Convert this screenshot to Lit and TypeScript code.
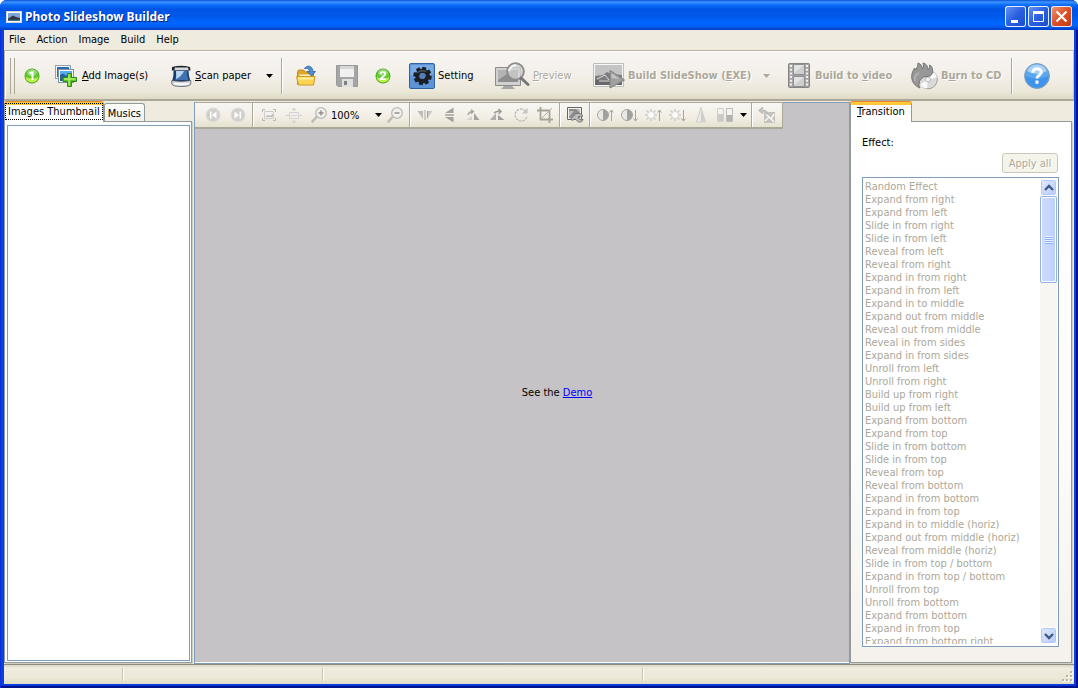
import { LitElement, html, css, svg, TemplateResult } from "lit";
import { customElement, property } from "lit/decorators.js";

type Glyph = [number, number, TemplateResult];

const badge = (digit: TemplateResult) => svg`
  <circle cx="8" cy="8" r="7.5" fill="#45a81c"/><circle cx="8" cy="8" r="6.8" fill="#62c832"/>
  <path d="M1.6 9a6.5 6.5 0 0 0 12.8 0c-3 2-9 2-12.8 0z" fill="#c2f04c"/>
  <ellipse cx="8" cy="4.6" rx="5" ry="3.4" fill="#a5e48a" opacity=".7"/>${digit}`;
const sun = svg`<path d="M6 2v12M0 8h12M1.5 3.5l9 9M10.5 3.5l-9 9" stroke="#cfcecb" stroke-width="1.5"/><circle cx="6" cy="8" r="3.5" fill="#fdfdfb" stroke="#d6d5d2"/>`;
const up = svg`<path d="M14.5 14V3M12.5 5.5l2-2.5 2 2.5" fill="none" stroke="#a6a59f"/>`;
const down = svg`<path d="M14.5 3v11M12.5 11.5l2 2.5 2-2.5" fill="none" stroke="#a6a59f"/>`;
const half = svg`<circle cx="6" cy="8" r="5.5" fill="#e9e8e4" stroke="#a9a8a4"/><path d="M6 2.5a5.5 5.5 0 0 1 0 11z" fill="#a2a19d"/>`;
const lens = (plus: boolean) => svg`
  <path d="M5.5 10L1.5 14.5" stroke="#bdbcb8" stroke-width="2.6" stroke-linecap="round"/>
  <circle cx="10" cy="6" r="5.3" fill="#f1f0ed" stroke="#bbbab6" stroke-width="1.3"/>
  <path d="M7.5 6h5" stroke="#8c8b86" stroke-width="1.4"/>${plus ? svg`<path d="M10 3.5v5" stroke="#8c8b86" stroke-width="1.4"/>` : ""}`;
const teeth = "M-1.8-9.2h3.6l.8 4h-5.2zM-1.8 9.2h3.6l.8-4h-5.2zM-9.2-1.8v3.6l4 .8v-5.2zM9.2-1.8v3.6l-4 .8v-5.2z";

const glyphs: Record<string, Glyph> = {
  app: [16, 14, svg`<rect x=".5" y="1.5" width="15" height="11" fill="#fff" stroke="#d8d8d8"/><rect x="2" y="3" width="12" height="8" fill="#7fa6d6"/><path d="M2 8.5l2-1 3-2 3 1.5 4 1v3H2z" fill="#2d3844"/><path d="M2 9.8h12V11H2z" fill="#536d8a"/>`],
  min: [21, 21, svg`<path d="M6 14h7v3H6z" fill="#fff"/>`],
  max: [21, 21, svg`<path d="M5.5 5.5h10v10h-10z" fill="none" stroke="#fff"/><path d="M5 5h11v3H5z" fill="#fff"/>`],
  close: [21, 21, svg`<path d="M5.5 5.5l10 10M15.5 5.5l-10 10" stroke="#fff" stroke-width="2.2"/>`],
  one: [16, 16, badge(svg`<path d="M5.5 5.5L8.5 4v8" fill="none" stroke="#fff" stroke-width="2"/>`)],
  two: [16, 16, badge(svg`<path d="M5.5 6c0-3 5.2-2.5 4.7.3C10 8 6 9.5 5.6 11.2h5.2" fill="none" stroke="#fff" stroke-width="1.8"/>`)],
  add: [22, 22, svg`<rect x=".5" y=".5" width="15" height="13" fill="#f4f7fa" stroke="#91a3b2"/><path d="M2 2h12v10H2z" fill="#2f6bb0"/><rect x="3.5" y="4.5" width="15" height="13" fill="#fff" stroke="#7f92a5"/><path d="M5 6h12v5H5z" fill="#5aabf0"/><path d="M5 10l3-1.5 3 2 6-2.5v8H5z" fill="#2a6098"/><path d="M12.5 8.5h4v4h5v4h-5v5h-4v-5H8v-4h4.5z" fill="#5cc826" stroke="#2c8a15"/><path d="M14 9.5v11M9 14h11.5" stroke="#b8f268" stroke-width="1.3"/>`],
  scan: [21, 22, svg`<path d="M1 2Q10-.5 19 2l.5 3.5H.8z" fill="#25292e"/><path d="M4 2.5h13l.5 2.5H3.5z" fill="#d6dade"/><path d="M2.5 5.5h15q0 6 2 11H1Q3 11 2.500 5.500z" fill="#173a6c"/><path d="M5 6h11q0 5 1.500 9H4Q5.500 11 5 6z" fill="#3f72b2"/><path d="M5 6h8q-2 5-8 8 .5-4 0-8z" fill="#bcd6ef"/><path d="M.8 15.500q9.500 2 19 0v3.500q-1 2.500-9.500 2.500T.8 19z" fill="#d5d9dd" stroke="#555b61" stroke-width=".8"/><path d="M3 18.500q7 1.500 15 0" fill="none" stroke="#fff" stroke-width="1.5"/>`],
  open: [22, 22, svg`<path d="M2.5 19.5V6.5l1-1.5h5l1.5 2h8.5v12z" fill="#e0a62a" stroke="#c18a1c"/><path d="M4.5 9.5h12l1 9H3.5z" fill="#fff2b8"/><path d="M1.5 11.5h18.5l-1.5 8.5h-15z" fill="#fbd454" stroke="#cf9a25"/><path d="M3 12.5h15.5l-.4 2H3.4z" fill="#fff09a"/><path d="M9.5 3.5c2-3.5 8-3.5 8.5 3h2.5l-4 4.5-4.3-4.5h2.6c-.3-2.8-3-3.5-5.3-3z" fill="#4d8fd0" stroke="#285f9d" stroke-width=".8"/>`],
  save: [22, 22, svg`<path d="M.5 .5h21v21H2l-1.5-1.5z" fill="#a5a5a5" stroke="#999"/><path d="M4 1h14v11H4z" fill="#f0f0f0"/><path d="M4 1h14v3H4z" fill="#d6d6d6"/><path d="M6 14h11v8H6z" fill="#e0e0e0"/><path d="M8 16h3v4H8z" fill="#808080"/>`],
  setting: [26, 26, svg`<rect x=".5" y=".5" width="25" height="25" rx="1.5" fill="#5a93d8" stroke="#31619f"/><path d="M1.5 12.5Q13 16 24.5 11V2h-23z" fill="#7aaae4"/><g transform="translate(13.5 13) rotate(12)"><circle r="5" fill="none" stroke="#1a1f25" stroke-width="4"/><path d="${teeth}" fill="#1a1f25"/><path d="${teeth}" fill="#1a1f25" transform="rotate(45)"/><circle r="3" fill="#547fb5"/></g><path d="M8 10q4-3.5 9-1.5" fill="none" stroke="#48525c" stroke-width="1.5"/>`],
  preview: [35, 28, svg`<path d="M.5 5.5h25v18H.5z" fill="#d1d1d1" stroke="#8c8c8c"/><path d="M3 8h20v12H3z" fill="#8d8d8d"/><path d="M3 8h15L3 18z" fill="#b4b4b4"/><path d="M9 24h8l3 3H6z" fill="#a5a5a5"/><circle cx="20.5" cy="9.5" r="8.3" fill="#d4d4d4" fill-opacity=".75" stroke="#8c8c8c" stroke-width="2"/><path d="M14 9q1-5 7-6" stroke="#f6f6f6" stroke-width="2" fill="none"/><path d="M26 16l7 6.5" stroke="#777" stroke-width="3" stroke-linecap="round"/>`],
  exe: [32, 26, svg`<path d="M.5 .5h30v23H.5z" fill="#f7f7f7" stroke="#bdbdbd"/><path d="M2 2h27v20H2z" fill="#c4c4c4"/><path d="M2 13l8-1 4-3 4 2 11 1v9H2z" fill="#7d7d7d"/><path d="M2 17h27v5H2z" fill="#686868"/><path d="M4 16l8-4 4 5M6 18h12" stroke="#ddd" fill="none"/><path d="M17 7.5V25l14.5-8z" fill="#a0a0a0" stroke="#7f7f7f"/><path d="M18.5 10v5l8 1z" fill="#c3c3c3"/>`],
  film: [22, 25, svg`<rect x=".5" y=".5" width="21" height="24" rx="1" fill="#a3a3a3" stroke="#858585"/><path d="M5.5 1.5h11v10h-11zM5.5 13.5h11v10h-11z" fill="#cfcfcf" stroke="#8f8f8f"/><path d="M6 2h10L6 10zM6 14h10L6 22z" fill="#e3e3e3"/><path d="M3 2v22M19 2v22" stroke="#f2f2f2" stroke-width="2.2" stroke-dasharray="2 1.7"/>`],
  burn: [27, 28, svg`<circle cx="17" cy="17.5" r="9.3" fill="#dadada" stroke="#9c9c9c"/><path d="M17 17.5l6-7a9 9 0 0 1 3 5zM17 17.5l-1 9a9 9 0 0 1-7-4z" fill="#fafafa"/><circle cx="17" cy="17.5" r="2.6" fill="#eee" stroke="#bbb"/><path d="M9 26C1 23-1 15 2 9l1.5-3L5 8C6 5 7 4 7 1c3 1 4 3 4.5 6 1.5-2 1-4 .5-6 4 1 5 4 5 7 1.5-1.5 2-3 1.500-5 4 2 4 8 1 10.500-3 2-6 0-8.500 2.500-3 3-4 6-2 10z" fill="#989898" stroke="#737373"/><path d="M4 19c-1-4 1-7 4-8" fill="none" stroke="#b4b4b4" stroke-width="1.8"/>`],
  help: [26, 26, svg`<circle cx="13" cy="13" r="12.4" fill="#5aa7ef" stroke="#7f97b0"/><path d="M1.5 13a11.5 11.5 0 0 0 23 0q-12 5-23 0z" fill="#3f93ea"/><path d="M3 8a11 11 0 0 1 20 0q-10 6-20 0z" fill="#a7d2f8"/><path d="M8.7 9.8c0-5.6 8.9-5.3 8.6-.5-.1 3-4.3 3-4.3 6.2" fill="none" stroke="#fff" stroke-width="3"/><path d="M11.5 17.5h3v3.2h-3z" fill="#fff"/>`],
  prev: [16, 16, svg`<circle cx="8" cy="8" r="7" fill="#d1d0cd" stroke="#dfdedb"/><path d="M5 4.5h1.5v7H5zM11.5 4.5v7L7 8z" fill="#fff"/>`],
  next: [16, 16, svg`<circle cx="8" cy="8" r="7" fill="#d1d0cd" stroke="#dfdedb"/><path d="M9.5 4.5H11v7H9.5zM4.5 4.5v7L9 8z" fill="#fff"/>`],
  fit: [16, 16, svg`<path d="M1.5 5V2.5H4M12 2.5h2.5V5M14.5 11v2.5H12M4 13.5H1.5V11" fill="none" stroke="#b9b8b4"/><path d="M3.5 4.5h9v7h-9z" fill="#f3f2ef" stroke="#cfcecb"/><path d="M4 10l3-2 2 1 3-2v3H4z" fill="#bcbbb8"/>`],
  actual: [16, 16, svg`<path d="M3.5 5.5h9v6h-9z" fill="#f2f1ee" stroke="#d4d3d0"/><path d="M8 1v3M8 13v3M0 8.5h3M13 8.5h3M6 3l2-2 2 2M6 14l2 2 2-2M5 9.5L7 8l2 1 2-1" stroke="#d0cfcc" fill="none"/>`],
  zin: [16, 16, lens(true)],
  zout: [16, 16, lens(false)],
  fliph: [16, 16, svg`<path d="M.5 4H6v8z" fill="#bcbbb7"/><path d="M8 3v10" stroke="#aaa9a5"/><path d="M15.5 4H10v8z" fill="#c9c8c4"/><path d="M10.5 4v7" stroke="#a3a29e"/>`],
  flipv: [16, 18, svg`<path d="M12.5 1.5V7H4zM12.5 16.5V11H4z" fill="#a3a29e"/><path d="M4 9h9" stroke="#a3a29e" stroke-width="1.5"/>`],
  rotl: [16, 16, svg`<path d="M9 6l5.5 7H9z" fill="#a3a29e"/><path d="M1.5 13H7V9z" fill="#d2d1cd"/><path d="M3 8q1-3.5 5-3.5M6 2.5l2.3 2L6 6.8" fill="none" stroke="#a8a7a3" stroke-width="1.5"/>`],
  rotr: [16, 16, svg`<path d="M1 13h6V6z" fill="#b0afab"/><path d="M9 13h6.5L9 8z" fill="#9f9e9a"/><path d="M5 6q3-2.5 7-1.5M9.5 2L12 4.5 9.5 7" fill="none" stroke="#9b9a96" stroke-width="1.5"/>`],
  rotate: [16, 16, svg`<path d="M12.5 4A6 6 0 1 0 14 9" fill="none" stroke="#bdbcb8" stroke-width="1.4" stroke-dasharray="2.5 1"/><path d="M14.5 1v5.5H9z" fill="#c4c3bf"/>`],
  crop: [18, 18, svg`<path d="M4.5 1v12.5H17M1 4.5h12.5V17" fill="none" stroke="#a7a395" stroke-width="1.8"/><path d="M5 13L16 2" stroke="#b3b0a4"/>`],
  edit: [18, 18, svg`<path d="M1.5 1.5h14v12h-14z" fill="#f1f1ef" stroke="#666"/><path d="M3 3h11v9H3z" fill="#8c8c8c"/><path d="M3 11l5-6H3zM10 3h4v4z" fill="#bcbcbc"/><path d="M10 7.5h4l3 2.5-2 1-2-1-1 2 3 2 2-1-1 2.500-3 .8-4-3.300-3 1.500-1-2z" fill="#bdbdbd" stroke="#6a6a6a" stroke-width=".8"/>`],
  conup: [17, 16, svg`${half}${up}`],
  condown: [17, 16, svg`${half}${down}`],
  briup: [17, 16, svg`${sun}${up}`],
  bridown: [17, 16, svg`${sun}${down}`],
  sharp: [16, 18, svg`<path d="M8 1.5L12.5 16h-9z" fill="#ebeae7" stroke="#cfcecb"/><path d="M8 3l4 12.5H8z" fill="#cfcecb"/>`],
  compare: [18, 16, svg`<path d="M1.5 1.5h6v13h-6z" fill="#f3f2ef" stroke="#d0cfcc"/><path d="M2 7h5.5v7H2z" fill="#cbcac7"/><path d="M10.5 1.5h6v13h-6z" fill="#f5f4f1" stroke="#bdbcb9"/><path d="M11 8h5v6h-5z" fill="#b5b4b1"/>`],
  undo: [18, 18, svg`<path d="M6 6h11v11H6z" fill="#c3c2be"/><path d="M7 15l4-4 2 2 3-5M8 8l8 8" stroke="#f8f8f6" stroke-width="1.5" fill="none"/><path d="M9.5 8.5q-.5-4-6-4M5 1.5l-3.5 3 3.500 3" fill="none" stroke="#bebdb9" stroke-width="2"/>`],
  arrow: [7, 4, svg`<path d="M0 0h7L3.5 4z" fill="currentColor"/>`],
  chevup: [10, 8, svg`<path d="M1 6l4-4 4 4" fill="none" stroke="#3f5785" stroke-width="2.3"/>`],
  chevdown: [10, 8, svg`<path d="M1 2l4 4 4-4" fill="none" stroke="#3f5785" stroke-width="2.3"/>`],
  grip: [12, 12, svg`<path d="M9 1h2v2H9zM5 5h2v2H5zM9 5h2v2H9zM1 9h2v2H1zM5 9h2v2H5zM9 9h2v2H9z" fill="#fff"/><path d="M8 0h2v2H8zM4 4h2v2H4zM8 4h2v2H8zM0 8h2v2H0zM4 8h2v2H4zM8 8h2v2H8z" fill="#b8b4a2"/>`],
};

@customElement("ui-icon")
class UiIcon extends LitElement {
  @property() name = "";
  static styles = css`
    :host { display: inline-flex; flex: none; }
    svg { display: block; overflow: visible; }
  `;
  render() {
    const [w, h, body] = glyphs[this.name];
    return html`<svg width=${w} height=${h} viewBox="0 0 ${w} ${h}" aria-hidden="true">${body}</svg>`;
  }
}

const effects = [
  "Random Effect", "Expand from right", "Expand from left", "Slide in from right", "Slide in from left",
  "Reveal from left", "Reveal from right", "Expand in from right", "Expand in from left", "Expand in to middle",
  "Expand out from middle", "Reveal out from middle", "Reveal in from sides", "Expand in from sides",
  "Unroll from left", "Unroll from right", "Build up from right", "Build up from left", "Expand from bottom",
  "Expand from top", "Slide in from bottom", "Slide in from top", "Reveal from top", "Reveal from bottom",
  "Expand in from bottom", "Expand in from top", "Expand in to middle (horiz)", "Expand out from middle (horiz)",
  "Reveal from middle (horiz)", "Slide in from top / bottom", "Expand in from top / bottom", "Unroll from top",
  "Unroll from bottom", "Expand from bottom", "Expand in from top", "Expand from bottom right",
];

@customElement("app-root")
class AppRoot extends LitElement {
  static styles = css`
    :host {
      display: block; height: 100vh; overflow: hidden; background: #fff;
      font-family: "DejaVu Sans Condensed", "DejaVu Sans", sans-serif; font-stretch: condensed;
      font-size: 11px; line-height: 13px; color: #000;
    }
    * { box-sizing: border-box; }
    button, select { font: inherit; color: inherit; margin: 0; padding: 0; border: 0; background: none; border-radius: 0; }
    button { display: inline-flex; align-items: center; white-space: nowrap; }
    .window {
      height: 100%; display: flex; flex-direction: column; overflow: hidden;
      border-radius: 7px 7px 0 0; background: #0b3fe0; padding: 0 4px 4px;
      box-shadow: inset 1px 0 #0831d9, inset -2px 0 #00138c, inset 0 -2px #00138c, inset 0 -3px #0734d8;
    }
    .title {
      flex: none; height: 30px; margin: 0 -4px; padding: 3px 6px 0 6px; display: flex; align-items: center; gap: 3px;
      background: linear-gradient(#0a52d8 0, #3d95ff 2px, #0a6cf7 5px, #0055e5 9px, #0058ea 16px, #0066ff 23px, #0063fb 26px, #0045c9 29px, #003dd7 30px);
    }
    .caption { flex: 1; margin: 0; font: bold 12px/18px "Noto Sans", sans-serif; font-stretch: normal; color: #fff; text-shadow: 1px 1px #0a1f7c; }
    .frame { display: flex; gap: 2px; }
    .frame button { width: 21px; height: 21px; border-radius: 3px; background: linear-gradient(135deg, #6b97f5, #2a5fe0 50%, #1a4cc8); box-shadow: inset 0 0 0 1px #e4ecfb; }
    .frame .shut { background: linear-gradient(135deg, #f09a7c, #dd4f24 50%, #c23a10); }
    .menu { flex: none; height: 20px; display: flex; gap: 11px; padding: 0 5px; background: #efebde; }
    .menu button { height: 19px; }
    .tools {
      flex: none; height: 51px; display: flex; align-items: center; padding: 1px 0 0 5px;
      border: 1px solid #b5b2a0; border-right-color: #c5c2b5; border-bottom: 2px solid #aca899;
      box-shadow: inset 1px 1px #fff; background: linear-gradient(#f8f6f3, #f3efe9 50%, #ebe7d8 85%, #dedac5);
    }
    .handle { width: 5px; height: 36px; border: solid #aca899; border-width: 0 1px; margin-right: 9px; }
    .rule { flex: none; width: 2px; height: 36px; background: #aca899; border-right: 1px solid #fff; }
    .tool { height: 40px; gap: 5px; flex: none; }
    .off { color: #aca899; text-shadow: 1px 1px #fff; }
    .strong { font: bold 11px/13px "DejaVu Sans Condensed", sans-serif; font-stretch: condensed; }
    .step { width: 16px; }
    .w-add { width: 116px; margin-left: 15px; }
    .w-scan { width: 86px; gap: 3px; }
    .w-arrow { width: 24px; justify-content: center; }
    .w-open { width: 41px; margin-left: 12px; }
    .w-save { width: 39px; }
    .w-two { width: 34px; }
    .w-set { width: 86px; gap: 3px; }
    .w-prev { width: 98px; gap: 3px; }
    .w-exe { width: 161px; gap: 3px; }
    .w-film { width: 123px; margin-left: 10px; }
    .w-burn { width: 100px; gap: 3px; }
    .w-help { width: 26px; margin-left: 11px; }
    .main { flex: 1; min-height: 0; display: grid; grid-template-columns: 188px minmax(0, 1fr) 222px; column-gap: 2px; background: #efebde; }
    .side, .props { display: flex; flex-direction: column; min-height: 0; }
    .props { margin: 0 2px 0 -2px; }
    .tabs { display: flex; flex: none; height: 21px; align-items: flex-end; margin-bottom: -1px; }
    .tab { height: 19px; border: 1px solid #919b9c; border-bottom: 0; border-radius: 3px 3px 0 0; background: linear-gradient(#fff, #f0f0ea); padding: 0 3px; }
    .tab.on { z-index: 1; height: 20px; background: #fff; border-top: 3px solid #ffc73c; box-shadow: 0 -1px #e68b2c; padding: 0 6px 4px; }
    .side .tab.on { padding: 0 1px 4px; }
    .focus { outline: 1px dotted #000; padding: 1px 2px; }
    .sheet { flex: 1; min-height: 0; display: flex; border: 1px solid #919b9c; background: #fcfcfe; padding: 3px 1px 1px 2px; box-shadow: 1px 1px #d0cebf; margin-bottom: 1px; }
    .thumbs { flex: 1; border: 1px solid #7f9db9; background: #fff; }
    .canvas { border: solid #7f9db9; border-width: 0 1px 1px; background: #c6c3c6; display: flex; flex-direction: column; align-items: flex-start; margin-top: 1px; box-shadow: inset 0 1px #7f9db9, inset 0 -1px #fff; }
    .edit { height: 27px; display: flex; align-items: center; padding: 0 3px 0 5px; border: solid #aca899; border-width: 1px 1px 2px 0; background: linear-gradient(#f8f6f3, #f3efe6 55%, #e6e2cf); }
    .edit button { width: 24px; height: 24px; justify-content: center; flex: none; }
    .edit .rule { height: 24px; margin: 0 2px; }
    .edit .drop { width: 12px; }
    .group { display: flex; }
    .wide { gap: 1px; padding-left: 1px; }
    .zoom { display: flex; align-items: center; width: 52px; }
    .zoom select { appearance: none; width: 44px; height: 16px; }
    .stage { align-self: stretch; flex: 1; display: flex; align-items: center; justify-content: center; }
    .stage p { margin: 0 0 8px 70px; }
    .stage a { color: #00f; }
    .props .sheet { flex-direction: column; padding: 14px 12px 15px 11px; background: linear-gradient(#fff, #fdfbfc 60%, #f5f2ec); }
    .head { display: flex; flex-direction: column; }
    .apply { align-self: flex-end; width: 56px; height: 20px; justify-content: center; margin: 4px 1px; border: 1px solid #c9c7ba; border-radius: 3px; background: #f5f4ea; }
    .box { flex: 1; min-height: 0; display: flex; border: 1px solid #7f9db9; background: #fff; padding: 1px 1px 2px; }
    .box select { flex: 1; min-width: 0; height: 100%; overflow: hidden; scrollbar-width: none; opacity: 1; color: #aca899; outline: 0; padding-top: 1px; }
    .box option { height: 13px; min-height: 13px; line-height: 13px; padding: 0 1px; color: #aca899; }
    .scroll { flex: none; width: 17px; display: flex; flex-direction: column; background: #f7f6f2; }
    .scroll button { flex: none; width: 17px; height: 17px; justify-content: center; border: 1px solid #fff; border-radius: 3px; background: linear-gradient(135deg, #e1eafe, #b7cbf9); box-shadow: inset 0 0 0 1px #b4c8f6; }
    .thumb { height: 87px; margin-bottom: auto; display: flex; align-items: center; justify-content: center; border: 1px solid #98b0e8; border-radius: 2px; background: linear-gradient(90deg, #cfddfd, #bdd0fb); box-shadow: inset 0 0 0 1px #fff; }
    .ridges { width: 8px; height: 8px; background: repeating-linear-gradient(#eef4fe 0 1px, #8cb0f8 1px 2px); }
    .status { flex: none; height: 20px; display: flex; align-items: center; border-top: 1px solid #8f8e80; background: linear-gradient(#d8d5c5, #efebde 3px, #ece9d8 13px, #dfdcc5); }
    .cell { height: 13px; border-right: 1px solid #fff; box-shadow: inset -1px 0 #c5c2b2; }
    .c1 { width: 120px; }
    .c2 { width: 200px; }
    .c3 { width: 320px; }
    .status ui-icon { margin: 5px 0 0 auto; }
  `;

  private small(names: string, cls = "") {
    return html`<div class="group ${cls}">${names.split(" ").map((n) => html`<button disabled aria-label=${n}><ui-icon name=${n}></ui-icon></button>`)}</div>`;
  }

  render() {
    return html`
      <div class="window">
        <header class="title">
          <ui-icon name="app"></ui-icon>
          <h1 class="caption">Photo Slideshow Builder</h1>
          <div class="frame">
            <button aria-label="Minimize"><ui-icon name="min"></ui-icon></button>
            <button aria-label="Maximize"><ui-icon name="max"></ui-icon></button>
            <button class="shut" aria-label="Close"><ui-icon name="close"></ui-icon></button>
          </div>
        </header>
        <nav class="menu">${["File", "Action", "Image", "Build", "Help"].map((m) => html`<button>${m}</button>`)}</nav>
        <div class="tools" role="toolbar">
          <span class="handle"></span>
          <ui-icon class="step" name="one"></ui-icon>
          <button class="tool w-add"><ui-icon name="add"></ui-icon><span><u>A</u>dd Image(s)</span></button>
          <button class="tool w-scan"><ui-icon name="scan"></ui-icon><span><u>S</u>can paper</span></button>
          <button class="tool w-arrow" aria-label="Scan options"><ui-icon name="arrow"></ui-icon></button>
          <span class="rule"></span>
          <button class="tool w-open" aria-label="Open"><ui-icon name="open"></ui-icon></button>
          <button class="tool w-save" aria-label="Save"><ui-icon name="save"></ui-icon></button>
          <ui-icon class="w-two" name="two"></ui-icon>
          <button class="tool w-set"><ui-icon name="setting"></ui-icon><span>Setting</span></button>
          <button class="tool w-prev off" disabled><ui-icon name="preview"></ui-icon><span><u>P</u>review</span></button>
          <button class="tool w-exe off strong" disabled><ui-icon name="exe"></ui-icon><span>Build SlideShow (<u>E</u>XE)</span></button>
          <button class="tool w-arrow off" disabled aria-label="Build options"><ui-icon name="arrow"></ui-icon></button>
          <button class="tool w-film off strong" disabled><ui-icon name="film"></ui-icon><span>Build to <u>v</u>ideo</span></button>
          <button class="tool w-burn off strong" disabled><ui-icon name="burn"></ui-icon><span>B<u>u</u>rn to CD</span></button>
          <span class="rule"></span>
          <button class="tool w-help" aria-label="Help"><ui-icon name="help"></ui-icon></button>
        </div>
        <main class="main">
          <section class="side">
            <div class="tabs" role="tablist">
              <button class="tab on" role="tab"><span class="focus">Images Thumbnail</span></button>
              <button class="tab" role="tab">Musics</button>
            </div>
            <div class="sheet"><div class="thumbs"></div></div>
          </section>
          <section class="canvas">
            <div class="edit" role="toolbar">
              ${this.small("prev next", "wide")}
              <span class="rule"></span>
              ${this.small("fit actual zin", "wide")}
              <div class="zoom"><select aria-label="Zoom"><option>100%</option></select><ui-icon name="arrow"></ui-icon></div>
              ${this.small("zout")}
              <span class="rule"></span>
              ${this.small("fliph flipv rotl rotr rotate crop")}
              <span class="rule"></span>
              ${this.small("edit")}
              <span class="rule"></span>
              ${this.small("conup condown briup bridown sharp compare")}
              <button class="drop" aria-label="Compare options"><ui-icon name="arrow"></ui-icon></button>
              <span class="rule"></span>
              ${this.small("undo")}
            </div>
            <div class="stage"><p>See the <a href="#demo">Demo</a></p></div>
          </section>
          <section class="props">
            <div class="tabs" role="tablist"><button class="tab on" role="tab"><span><u>T</u>ransition</span></button></div>
            <div class="sheet">
              <div class="head">
                <label for="effects">Effect:</label>
                <button class="apply off" disabled>Apply all</button>
              </div>
              <div class="box">
                <select id="effects" size="36" disabled>${effects.map((e) => html`<option>${e}</option>`)}</select>
                <div class="scroll">
                  <button aria-label="Scroll up"><ui-icon name="chevup"></ui-icon></button>
                  <div class="thumb"><span class="ridges"></span></div>
                  <button aria-label="Scroll down"><ui-icon name="chevdown"></ui-icon></button>
                </div>
              </div>
            </div>
          </section>
        </main>
        <footer class="status"><span class="cell c1"></span><span class="cell c2"></span><span class="cell c3"></span><ui-icon name="grip"></ui-icon></footer>
      </div>`;
  }
}
